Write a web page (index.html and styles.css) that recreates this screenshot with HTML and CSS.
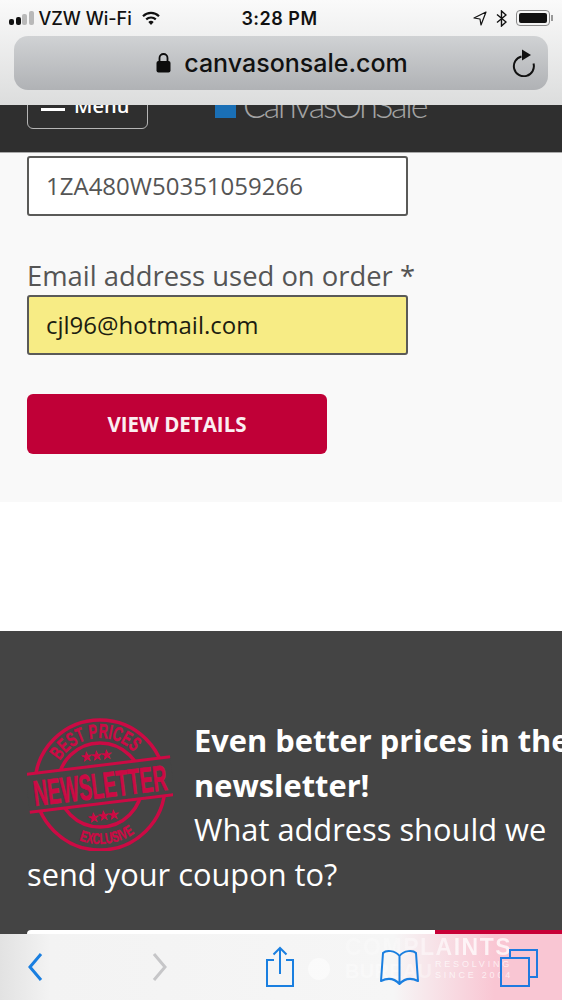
FILE: index.html
```html
<!DOCTYPE html>
<html lang="en">
<head>
<meta charset="utf-8">
<title>canvasonsale.com</title>
<link rel="stylesheet" href="styles.css">
</head>
<body>
<div class="phone">
  <header class="site-header">
    <div class="menu-btn"><span class="menu-bars"></span><span class="menu-label">Menu</span></div>
    <div class="logo"><span class="logo-mark"></span><span class="logo-text">CanvasOnSale</span></div>
  </header>

  <main class="lookup">
    <div class="field field-plain">1ZA480W50351059266</div>
    <label class="field-label">Email address used on order *</label>
    <div class="field field-filled">cjl96@hotmail.com</div>
    <button class="primary-btn">VIEW DETAILS</button>
  </main>

  <div class="spacer"></div>

  <section class="newsletter">
    <div class="newsletter-copy">
      <svg class="stamp" viewBox="0 0 146 134" width="146" height="134" aria-hidden="true">
        <defs>
          <path id="arcTop" d="M26 68 A47 47 0 0 1 120 68"/>
          <path id="arcBottom" d="M14 68 A59 59 0 0 0 132 68"/>
        </defs>
        <g fill="none" stroke="#cc0a44">
          <circle cx="73" cy="68" r="65" stroke-width="3.5"/>
          <circle cx="73" cy="68" r="42" stroke-width="3.5"/>
        </g>
        <g fill="#cc0a44" stroke="#cc0a44" stroke-width="0.5" font-family="'Liberation Sans', sans-serif" font-weight="700" transform="rotate(-7 73 68)">
          <text font-size="20"><textPath href="#arcTop" startOffset="31" textLength="86" lengthAdjust="spacingAndGlyphs">BEST PRICES</textPath></text>
          <text font-size="15"><textPath href="#arcBottom" startOffset="64" textLength="58" lengthAdjust="spacingAndGlyphs">EXCLUSIVE</textPath></text>
          <text x="73" y="42" font-size="11" text-anchor="middle">★★★</text>
          <text x="73" y="103" font-size="11" text-anchor="middle">★★★</text>
        </g>
        <g transform="rotate(-7 73 68)">
          <rect x="0" y="49" width="146" height="38" fill="#444444"/>
          <rect x="0" y="47" width="146" height="3" fill="#cc0a44"/>
          <rect x="0" y="85" width="146" height="3" fill="#cc0a44"/>
          <text x="73" y="81" fill="#cc0a44" stroke="#cc0a44" stroke-width="0.7" font-family="'Liberation Sans', sans-serif" font-weight="700" font-size="36" text-anchor="middle" textLength="134" lengthAdjust="spacingAndGlyphs">NEWSLETTER</text>
        </g>
      </svg>
      <strong>Even better prices in the newsletter!</strong><br>
      What address should we send your coupon to?
    </div>
    <div class="subscribe">
      <div class="subscribe-input"></div>
      <div class="subscribe-btn"></div>
    </div>
  </section>

  <div class="browser-top">
    <div class="status-bar">
      <div class="status-left">
        <span class="signal"><i></i><i></i><i class="off"></i><i class="off"></i></span>
        <span>VZW Wi-Fi</span>
        <svg width="20" height="15" viewBox="0 0 20 15" aria-hidden="true"><path d="M10 14 L7.3 11 A4 4 0 0 1 12.7 11 Z" fill="#111"/><path d="M5.2 8.4 A7 7 0 0 1 14.8 8.4" fill="none" stroke="#111" stroke-width="2.2"/><path d="M2 5.2 A11.5 11.5 0 0 1 18 5.2" fill="none" stroke="#111" stroke-width="2.2"/></svg>
      </div>
      <div class="status-time">3:28 PM</div>
      <div class="status-right">
        <svg width="14" height="15" viewBox="0 0 14 15" aria-hidden="true"><path d="M13 1 L1 7 L7 8 L8 14 Z" fill="none" stroke="#111" stroke-width="1.2" stroke-linejoin="round"/></svg>
        <svg width="11" height="17" viewBox="0 0 11 17" aria-hidden="true"><path d="M1 4.5 L10 12 L5.5 16 V1 L10 5 L1 12.5" fill="none" stroke="#111" stroke-width="1.4"/></svg>
        <span class="battery"><span class="battery-fill"></span></span>
      </div>
    </div>
    <div class="url-bar">
      <div class="url-center">
        <svg width="15" height="20" viewBox="0 0 15 20" aria-hidden="true"><rect x="0.5" y="8" width="14" height="11.5" rx="2" fill="#0c0c0c"/><path d="M3.5 9 V5 A4 4 0 0 1 11.5 5 V9" fill="none" stroke="#0c0c0c" stroke-width="1.8"/></svg>
        <span class="url-text">canvasonsale.com</span>
      </div>
      <svg class="reload" width="24" height="28" viewBox="0 0 24 28" aria-hidden="true"><path d="M9.5 7.5 A10 10 0 1 0 21.5 14.5" fill="none" stroke="#111" stroke-width="2"/><path d="M10 0.5 L19 6 L10 11.5 Z" fill="#111"/></svg>
    </div>
  </div>

  <nav class="browser-bottom">
    <div class="watermark">
      <span class="wm-dot"></span>
      <span class="wm-a">COMPLAINTS</span>
      <span class="wm-b">BUREAU</span>
      <span class="wm-c">RESOLVING<br>SINCE 2004</span>
    </div>
    <svg class="tool" width="16" height="30" viewBox="0 0 16 30" aria-hidden="true"><path d="M14 2 L3 15 L14 28" fill="none" stroke="#1a7fe0" stroke-width="3"/></svg>
    <svg class="tool" width="16" height="30" viewBox="0 0 16 30" aria-hidden="true"><path d="M2 2 L13 15 L2 28" fill="none" stroke="#c6c6c8" stroke-width="3"/></svg>
    <svg class="tool" width="30" height="42" viewBox="0 0 30 42" aria-hidden="true"><path d="M9 14 H2 V40 H28 V14 H21" fill="none" stroke="#1a7fe0" stroke-width="2"/><path d="M15 28 V2 M8.5 8.5 L15 2 L21.5 8.5" fill="none" stroke="#1a7fe0" stroke-width="2"/></svg>
    <svg class="tool" width="39" height="37" viewBox="0 0 39 37" aria-hidden="true"><path d="M19.5 7 C15 1 6 1 3 4 L1 32 C7 29 14 29 19.5 35 C25 29 32 29 38 32 L36 4 C33 1 24 1 19.5 7 V35" fill="none" stroke="#1a7fe0" stroke-width="2" stroke-linejoin="round"/></svg>
    <svg class="tool" width="39" height="39" viewBox="0 0 39 39" aria-hidden="true"><path d="M11 10 V2 H38 V29 H30" fill="none" stroke="#1f7ae0" stroke-width="2"/><rect x="2" y="10" width="28" height="28" fill="none" stroke="#1f7ae0" stroke-width="2"/></svg>
  </nav>
</div>
</body>
</html>
```
FILE: styles.css
```css
* { box-sizing: border-box; }
html, body { margin: 0; padding: 0; }
body { font-family: "Open Sans", "Liberation Sans", sans-serif; background: #fff; }

.phone { position: relative; width: 562px; height: 1000px; overflow: hidden; background: #fff; }

.site-header {
  height: 153px;
  padding: 84px 0 0 27px;
  background: #2f2f2f;
  border-bottom: 1px solid #a9a9a9;
  display: flex;
  align-items: flex-start;
  gap: 67px;
}
.menu-btn {
  width: 121px;
  height: 45px;
  border: 1.5px solid #b5b5b5;
  border-radius: 6px;
  padding-left: 13px;
  display: flex;
  align-items: center;
  gap: 9px;
  color: #fff;
}
.menu-bars { width: 24px; height: 3px; margin-top: 6px; background: #fff; flex: none; }
.menu-label { font-size: 20px; font-weight: 600; line-height: 24px; margin-top: -2px; }
.logo { display: flex; align-items: flex-start; gap: 7px; }
.logo-mark { width: 21px; height: 34px; background: #1a6fb5; }
.logo-text {
  font-family: Lato, "Liberation Sans", sans-serif;
  font-size: 34px;
  line-height: 36px;
  letter-spacing: -2.2px;
  margin-top: 3px;
  color: #a3a3a3;
  font-weight: 300;
}

.lookup {
  height: 349px;
  padding: 3px 0 0 27px;
  background: #f9f9f9;
  display: flex;
  flex-direction: column;
  align-items: flex-start;
}
.field {
  width: 381px;
  height: 60px;
  border: 2px solid #5a5a58;
  border-radius: 3px;
  padding-left: 17px;
  font-size: 24px;
  line-height: 56px;
}
.field-plain { background: #fff; color: #555; }
.field-label { margin-top: 41px; font-size: 27.4px; line-height: 38px; color: #555; }
.field-filled { background: #f7ec85; color: #1d1d10; }
.primary-btn {
  margin-top: 39px;
  width: 300px;
  height: 60px;
  border: 0;
  border-radius: 6px;
  background: #c00037;
  color: #fbeef1;
  font-family: inherit;
  font-size: 20.5px;
  font-weight: 700;
}

.spacer { height: 129px; background: #fff; }

.newsletter { height: 369px; padding: 87px 0 0 27px; background: #444444; color: #fff; }
.newsletter-copy { width: 575px; font-size: 30.8px; line-height: 44.7px; }
.newsletter-copy strong { font-weight: 700; }
.stamp { float: left; margin: -1px 21px 0 0; }
.subscribe { display: flex; margin-top: 33px; width: 600px; }
.subscribe-input { width: 408px; height: 60px; background: #fff; border-radius: 4px 0 0 0; }
.subscribe-btn { flex: 1; height: 60px; background: #c80037; }

.browser-top {
  position: absolute;
  left: 0;
  top: 0;
  width: 100%;
  height: 105px;
  background: linear-gradient(#fafafa, #dcdddd);
  color: #111;
  font-family: Inter, "Liberation Sans", sans-serif;
}
.status-bar {
  height: 36px;
  padding: 0 12px 0 9px;
  display: grid;
  grid-template-columns: 1fr auto 1fr;
  align-items: center;
  font-size: 18px;
  font-weight: 500;
}
.status-left { display: flex; align-items: center; gap: 5px; }
.signal { display: flex; align-items: flex-end; gap: 1.5px; height: 14px; }
.signal i { width: 5px; background: #111; border-radius: 2px; }
.signal i:nth-child(1) { height: 6px; }
.signal i:nth-child(2) { height: 8px; }
.signal i:nth-child(3) { height: 11px; }
.signal i:nth-child(4) { height: 14px; }
.signal i.off { background: #b9b9b9; }
.status-left svg { margin-left: 4px; }
.status-time { font-weight: 600; letter-spacing: 0.5px; }
.status-right { display: flex; align-items: center; justify-content: flex-end; gap: 9px; }
.battery { position: relative; width: 34px; height: 16px; padding: 2px; border: 1.2px solid #888; border-radius: 4px; display: block; }
.battery::after { content: ""; position: absolute; right: -4px; top: 4px; width: 2px; height: 6px; background: #999; }
.battery-fill { display: block; width: 100%; height: 100%; background: #111; border-radius: 2px; }

.url-bar {
  position: relative;
  margin: 0 14px;
  height: 54px;
  border-radius: 14px;
  background: linear-gradient(#d0d2d4, #b0b2b5);
  display: flex;
  align-items: center;
  justify-content: center;
}
.url-center { display: flex; align-items: center; gap: 13px; margin-left: 2px; }
.url-text { font-size: 25px; font-weight: 500; line-height: 30px; color: #111; }
.reload { position: absolute; right: 12px; top: 13px; }

.browser-bottom {
  position: absolute;
  left: 0;
  bottom: 0;
  width: 100%;
  height: 66px;
  background: linear-gradient(90deg, #e2e2e2 0, #f3f3f3 9%, #f6f6f6 70%, #f9c6d3 88%, #f9c6d3 100%);
  display: grid;
  grid-template-columns: 125px 113px 115px 119px auto;
  align-items: center;
  padding: 0 0 0 27px;
}
.tool { position: relative; }
.watermark {
  position: absolute;
  left: 308px;
  top: 2px;
  width: 210px;
  height: 60px;
  font-family: "Liberation Sans", sans-serif;
  font-weight: 700;
  line-height: 1;
}
.wm-dot { position: absolute; left: 0; top: 22px; width: 22px; height: 22px; border-radius: 50%; background: rgba(255,255,255,.5); }
.wm-a {
  position: absolute;
  left: 37px;
  top: 0;
  font-size: 23px;
  letter-spacing: 1.5px;
  color: transparent;
  background: linear-gradient(90deg, rgba(255,255,255,.25) 30%, rgba(255,255,255,.75) 70%);
  background-clip: text;
  -webkit-background-clip: text;
}
.wm-b { position: absolute; left: 37px; top: 25px; font-size: 20px; letter-spacing: .3px; color: rgba(255,255,255,.35); }
.wm-c { position: absolute; left: 127px; top: 23px; font-size: 9px; letter-spacing: 2.8px; font-weight: 400; line-height: 11px; color: rgba(255,255,255,.7); white-space: nowrap; }
```
